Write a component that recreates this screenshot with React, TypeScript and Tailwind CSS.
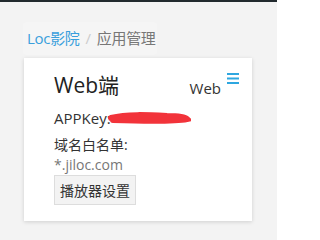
import React from 'react';

const Scribble: React.FC = () => (
  <svg width="84" height="14" viewBox="0 0 84 14" className="-ml-1">
    <path
      d="M4 7 C20 3, 40 4, 60 5 C70 5, 78 6, 80 8 C70 10, 40 10, 6 9"
      fill="none"
      stroke="#f2333a"
      strokeWidth="6"
      strokeLinecap="round"
    />
  </svg>
);

const App: React.FC = () => {
  return (
    <div
      className="w-[277px] h-[240px] bg-[#f3f3f3] overflow-hidden"
      style={{ fontFamily: '"Open Sans", "Noto Sans CJK SC", sans-serif' }}
    >
      <div className="h-[2px] bg-[#222a2e]" />
      <div className="pt-[20px] pl-[23px]">
        <div className="inline-flex items-center whitespace-nowrap h-[33px] w-[134px] bg-[#f5f5f5] rounded pl-[4px] text-[15px] tracking-[-0.3px]">
          <span className="text-[#3a9fdc]">Loc影院</span>
          <span className="text-[#cccccc] mx-[6px]">/</span>
          <span className="text-[#777777]">应用管理</span>
        </div>
      </div>
      <div className="ml-[24px] mt-[3px] w-[228px] h-[163px] bg-white shadow-[0_1px_4px_rgba(0,0,0,0.15)] pl-[30px] pr-[13px] pt-[14px]">
        <div className="flex items-start">
          <span className="text-[21px] leading-[26px] text-[#222]">Web端</span>
          <span className="ml-auto mt-[6px] text-[15px] leading-[20px] text-[#333]">Web</span>
          <svg width="12" height="11" viewBox="0 0 12 11" className="ml-[6px] mt-[1px]">
            <rect x="0" y="0" width="12" height="2" fill="#2ea7e0" />
            <rect x="0" y="4.5" width="12" height="2" fill="#2ea7e0" />
            <rect x="0" y="9" width="12" height="2" fill="#2ea7e0" />
          </svg>
        </div>
        <div className="flex items-center mt-[10px] text-[15px] leading-[20px] text-[#333]">
          <span>APPKey:</span>
          <Scribble />
        </div>
        <div className="mt-[7px] text-[14px] leading-[20px] text-[#333]">域名白名单:</div>
        <div className="text-[14px] leading-[20px] text-[#777]">*.jiloc.com</div>
        <button className="mt-0 w-[82px] h-[30px] border border-[#dddddd] bg-[#f3f3f3] text-[14px] text-[#333] flex items-center justify-center">
          播放器设置
        </button>
      </div>
    </div>
  );
};

export default App;
